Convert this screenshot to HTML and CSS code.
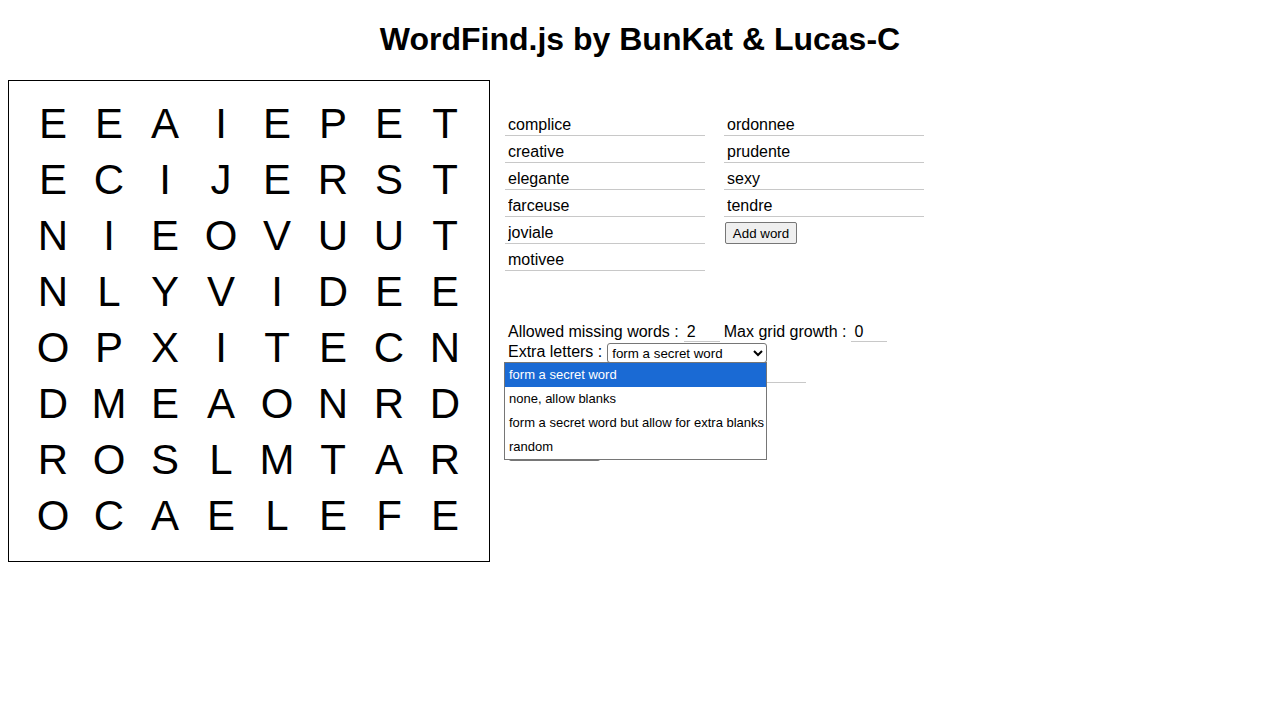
FILE: index.html
```html
<!DOCTYPE html>
<html lang="en">
<head>
  <meta charset="UTF-8">
  <title>WordFind.js</title>
  <link rel="stylesheet" href="styles.css">
</head>
<body>
  <h1>WordFind.js by BunKat &amp; Lucas-C</h1>
  <div class="main">
    <div class="puzzle">
      <span>E</span><span>E</span><span>A</span><span>I</span><span>E</span><span>P</span><span>E</span><span>T</span>
      <span>E</span><span>C</span><span>I</span><span>J</span><span>E</span><span>R</span><span>S</span><span>T</span>
      <span>N</span><span>I</span><span>E</span><span>O</span><span>V</span><span>U</span><span>U</span><span>T</span>
      <span>N</span><span>L</span><span>Y</span><span>V</span><span>I</span><span>D</span><span>E</span><span>E</span>
      <span>O</span><span>P</span><span>X</span><span>I</span><span>T</span><span>E</span><span>C</span><span>N</span>
      <span>D</span><span>M</span><span>E</span><span>A</span><span>O</span><span>N</span><span>R</span><span>D</span>
      <span>R</span><span>O</span><span>S</span><span>L</span><span>M</span><span>T</span><span>A</span><span>R</span>
      <span>O</span><span>C</span><span>A</span><span>E</span><span>L</span><span>E</span><span>F</span><span>E</span>
    </div>

    <div class="side">
      <div class="words">
        <div class="word-col">
          <input class="word" type="text" value="complice">
          <input class="word" type="text" value="creative">
          <input class="word" type="text" value="elegante">
          <input class="word" type="text" value="farceuse">
          <input class="word" type="text" value="joviale">
          <input class="word" type="text" value="motivee">
        </div>
        <div class="word-col">
          <input class="word" type="text" value="ordonnee">
          <input class="word" type="text" value="prudente">
          <input class="word" type="text" value="sexy">
          <input class="word" type="text" value="tendre">
          <button class="add-word">Add word</button>
        </div>
      </div>

      <div class="options">
        <div class="opt-row">
          <span>Allowed missing words :</span>
          <input class="num" type="text" value="2">
          <span>Max grid growth :</span>
          <input class="num" type="text" value="0">
        </div>
        <div class="opt-row">
          <span>Extra letters :</span>
          <select class="extra">
            <option>form a secret word</option>
            <option>none, allow blanks</option>
            <option>form a secret word but allow for extra blanks</option>
            <option>random</option>
          </select>
        </div>
        <div class="opt-row secret-row">
          <input class="secret" type="text" value="">
        </div>
        <div class="actions">
          <button class="create"></button>
        </div>

        <!-- liste ouverte du select -->
        <ul class="dropdown">
          <li class="selected">form a secret word</li>
          <li>none, allow blanks</li>
          <li>form a secret word but allow for extra blanks</li>
          <li>random</li>
        </ul>
      </div>
    </div>
  </div>
</body>
</html>
```

FILE: styles.css
```css
body {
  margin: 8px;
  font-family: 'Liberation Sans', Arial, sans-serif;
  color: #000;
  background: #fff;
}
h1 {
  font-size: 32px;
  font-weight: bold;
  text-align: center;
  margin: 13px 0 22px;
  line-height: 37px;
}
.main {
  display: flex;
  align-items: flex-start;
  gap: 15px;
}
/* grille de lettres */
.puzzle {
  display: grid;
  grid-template-columns: repeat(8, 56px);
  grid-auto-rows: 56px;
  padding: 16px;
  border: 1px solid #000;
}
.puzzle span {
  font-size: 42px;
  line-height: 54px;
  text-align: center;
}
.side {
  padding-top: 29px;
}
.words {
  display: flex;
  gap: 19px;
}
.word-col {
  display: flex;
  flex-direction: column;
  align-items: flex-start;
  width: 200px;
}
input.word {
  box-sizing: border-box;
  width: 200px;
  height: 27px;
  padding: 5px 3px 0;
  border: 0;
  border-bottom: 1px solid #c8c8c8;
  font-family: 'Liberation Sans', Arial, sans-serif;
  font-size: 16px;
  color: #000;
  outline: none;
}
button {
  font-family: 'Liberation Sans', Arial, sans-serif;
  font-size: 13.33px;
  color: #000;
  background: #efefef;
  border: 1px solid #767676;
  border-radius: 2px;
  padding: 0 6px;
  height: 22px;
  white-space: nowrap;
}
.add-word {
  margin: 5px 0 0 1px;
  width: 72px;
}
.options {
  position: relative;
  margin-top: 51px;
  padding-left: 3px;
  font-size: 16px;
}
.opt-row {
  display: flex;
  align-items: flex-start;
  height: 20px;
  line-height: 20px;
}
input.num, input.secret {
  box-sizing: border-box;
  height: 20px;
  padding: 0 3px;
  border: 0;
  border-bottom: 1px solid #c8c8c8;
  font-family: 'Liberation Sans', Arial, sans-serif;
  font-size: 16px;
  outline: none;
}
input.num {
  width: 36px;
  margin: 0 4px 0 5px;
}
.secret-row {
  width: 298px;
  justify-content: flex-end;
}
input.secret {
  width: 200px;
  height: 21px;
}
select.extra {
  box-sizing: border-box;
  width: 160px;
  height: 20px;
  margin: 1px 0 0 5px;
  font-family: 'Liberation Sans', Arial, sans-serif;
  font-size: 13.33px;
  border: 1px solid #767676;
  border-radius: 3px;
  background: #fff;
  color: #000;
}
.actions {
  margin-top: 57px;
  padding-left: 1px;
}
.create {
  width: 91px;
  border-bottom-width: 2px;
}
/* popup du select, par dessus le reste */
.dropdown {
  position: absolute;
  left: -1px;
  top: 40px;
  width: 261px;
  margin: 0;
  padding: 0;
  list-style: none;
  background: #fff;
  border: 1px solid #767676;
  font-size: 13px;
}
.dropdown li {
  height: 24px;
  line-height: 24px;
  padding-left: 4px;
  white-space: nowrap;
}
.dropdown li.selected {
  background: #1a6ad4;
  color: #fff;
}
```
